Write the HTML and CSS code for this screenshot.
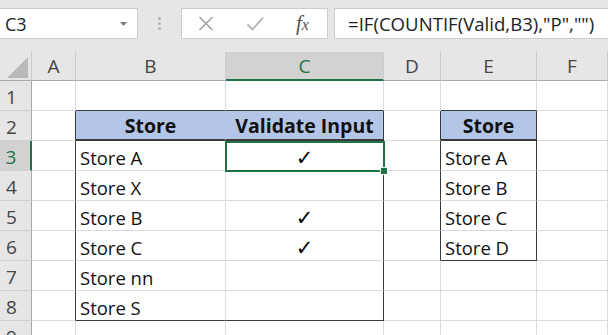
FILE: index.html
```html
<!DOCTYPE html>
<html lang="en">

<head>
    <meta charset="UTF-8">
    <title>Validate Input</title>
    <link rel="stylesheet" href="styles.css">
</head>

<body>

    <!-- Formula bar -->
    <div class="toolbar">
        <div class="name-box">
            <span>C3</span>
            <svg class="caret" width="7" height="4" viewBox="0 0 7 4"><path d="M0 0h7L3.5 4z" fill="#7b7b7b"/></svg>
        </div>
        <div class="grip"><i></i><i></i><i></i></div>
        <div class="fx-buttons">
            <svg width="16" height="15" viewBox="0 0 16 15"><path d="M1.5 1l13 13M14.5 1l-13 13" stroke="#a3a3a3" stroke-width="1.6" fill="none"/></svg>
            <svg width="18" height="15" viewBox="0 0 18 15"><path d="M1.5 8.5l5 5L17 1.5" stroke="#b0b0b0" stroke-width="1.8" fill="none"/></svg>
            <span class="fx">f<span>x</span></span>
        </div>
        <div class="formula">=IF(COUNTIF(Valid,B3),"P","")</div>
    </div>

    <!-- Sheet -->
    <div class="sheet">
        <table class="grid">
            <colgroup>
                <col style="width:32px">
                <col style="width:44px">
                <col style="width:150px">
                <col style="width:158px">
                <col style="width:57px">
                <col style="width:96px">
                <col style="width:71px">
            </colgroup>
            <tr class="col-heads">
                <th class="corner"><svg width="21" height="21" viewBox="0 0 21 21"><path d="M21 0v21H0z" fill="#b9b9b9"/></svg></th>
                <th>A</th>
                <th>B</th>
                <th class="sel">C</th>
                <th>D</th>
                <th>E</th>
                <th>F</th>
            </tr>
            <tr>
                <th class="row-head">1</th>
                <td></td>
                <td class="ol-b"></td>
                <td class="ol-b"></td>
                <td></td>
                <td class="ol-b"></td>
                <td></td>
            </tr>
            <tr>
                <th class="row-head">2</th>
                <td class="ol-r"></td>
                <td class="hd hd-join">Store</td>
                <td class="hd ol-r">Validate Input</td>
                <td class="ol-r"></td>
                <td class="hd ol-r">Store</td>
                <td></td>
            </tr>
            <tr>
                <th class="row-head sel-row">3</th>
                <td class="ol-r"></td>
                <td>Store A</td>
                <td class="chk ol-r">✓</td>
                <td class="ol-r"></td>
                <td class="ol-r">Store A</td>
                <td></td>
            </tr>
            <tr>
                <th class="row-head">4</th>
                <td class="ol-r"></td>
                <td>Store X</td>
                <td class="chk ol-r"></td>
                <td class="ol-r"></td>
                <td class="ol-r">Store B</td>
                <td></td>
            </tr>
            <tr>
                <th class="row-head">5</th>
                <td class="ol-r"></td>
                <td>Store B</td>
                <td class="chk ol-r">✓</td>
                <td class="ol-r"></td>
                <td class="ol-r">Store C</td>
                <td></td>
            </tr>
            <tr>
                <th class="row-head">6</th>
                <td class="ol-r"></td>
                <td>Store C</td>
                <td class="chk ol-r">✓</td>
                <td class="ol-r"></td>
                <td class="ol-r ol-b">Store D</td>
                <td></td>
            </tr>
            <tr>
                <th class="row-head">7</th>
                <td class="ol-r"></td>
                <td>Store nn</td>
                <td class="chk ol-r"></td>
                <td></td>
                <td></td>
                <td></td>
            </tr>
            <tr>
                <th class="row-head">8</th>
                <td class="ol-r"></td>
                <td class="ol-b">Store S</td>
                <td class="chk ol-r ol-b"></td>
                <td></td>
                <td></td>
                <td></td>
            </tr>
            <tr>
                <th class="row-head">9</th>
                <td></td>
                <td></td>
                <td></td>
                <td></td>
                <td></td>
                <td></td>
            </tr>
        </table>

        <!-- Active cell C3 -->
        <div class="selection"><span class="fill-handle"></span></div>
    </div>

</body>

</html>
```

FILE: styles.css
```css
* {
    box-sizing: border-box;
}

body {
    margin: 0;
    background-color: #fff;
    font-family: "Open Sans", "Liberation Sans", sans-serif;
    overflow: hidden;
}

/*--------------Formula bar-------------*/
.toolbar {
    display: flex;
    align-items: center;
    height: 52px;
    padding: 8px 0 13px;
    background-color: #e6e6e6;
}

.name-box {
    display: flex;
    align-items: center;
    justify-content: space-between;
    width: 138px;
    height: 31px;
    padding: 0 10px 0 5px;
    background-color: #fff;
    border: 1px solid #cdcdcd;
    border-left: none;
    font-size: 18px;
    color: #222;
}

.grip {
    display: flex;
    flex-direction: column;
    align-items: center;
    gap: 2px;
    width: 43px;
}

.grip i {
    width: 3px;
    height: 3px;
    border-radius: 50%;
    background-color: #b3b3b3;
}

.fx-buttons {
    display: flex;
    align-items: center;
    width: 147px;
    height: 31px;
    padding-left: 16px;
    background-color: #fff;
    border: 1px solid #cdcdcd;
}

.fx-buttons svg + svg {
    margin-left: 32px;
}

.fx {
    margin-left: 32px;
    font-family: "Liberation Serif", serif;
    font-style: italic;
    font-size: 21px;
    color: #555;
}

.fx span {
    font-size: 16px;
}

.formula {
    flex: 1;
    display: flex;
    align-items: center;
    height: 31px;
    margin-left: 6px;
    padding-left: 13px;
    background-color: #fff;
    border: 1px solid #cdcdcd;
    border-right: none;
    font-size: 18.6px;
    color: #222;
    white-space: nowrap;
}

/*--------------Sheet-------------*/
.sheet {
    position: relative;
}

.grid {
    width: 608px;
    table-layout: fixed;
    border-collapse: separate;
    border-spacing: 0;
}

.grid td,
.grid th {
    height: 30px;
    padding: 4px 4px 0;
    border-right: 1px solid #dadada;
    border-bottom: 1px solid #dadada;
    font-size: 18.5px;
    line-height: 24px;
    color: #111;
    white-space: nowrap;
    overflow: hidden;
    text-align: left;
}

.grid .col-heads th {
    height: 29px;
    padding: 0 4px;
    background-color: #e6e6e6;
    border-right-color: #cbcbcb;
    border-bottom-color: #a9a9a9;
    font-weight: normal;
    font-size: 19px;
    color: #444;
    text-align: center;
}

.grid .col-heads .corner {
    padding: 5px 3px 0 0;
    vertical-align: top;
}

.corner svg {
    display: block;
    margin-left: auto;
}

.grid .row-head {
    padding: 2px 8px 0 0;
    background-color: #e6e6e6;
    border-right-color: #a9a9a9;
    border-bottom-color: #d0d0d0;
    font-weight: normal;
    font-size: 19px;
    color: #444;
    text-align: center;
}

/* selected column / row */
.grid .col-heads .sel {
    background-color: #d2d2d2;
    border-bottom: 2px solid #217346;
    color: #217346;
}

.grid .sel-row {
    background-color: #d2d2d2;
    border-right: 2px solid #217346;
    color: #217346;
}

/* table outlines */
.grid .ol-r {
    border-right-color: #3a3a3a;
}

.grid .ol-b {
    border-bottom-color: #3a3a3a;
}

.grid .hd {
    padding-top: 2px;
    background-color: #b4c6e7;
    border-bottom: 2px solid #3a3a3a;
    font-weight: bold;
    font-size: 19.5px;
    text-align: center;
}

.grid .hd-join {
    border-right-color: #b4c6e7;
}

.grid .chk {
    font-family: "DejaVu Sans", sans-serif;
    font-size: 21px;
    color: #000;
    text-align: center;
}

/* active cell */
.selection {
    position: absolute;
    left: 225px;
    top: 89px;
    width: 160px;
    height: 31px;
    border: 2px solid #217346;
}

.fill-handle {
    position: absolute;
    right: -5px;
    bottom: -5px;
    width: 8px;
    height: 8px;
    background-color: #217346;
    border: 1px solid #fff;
}
```
